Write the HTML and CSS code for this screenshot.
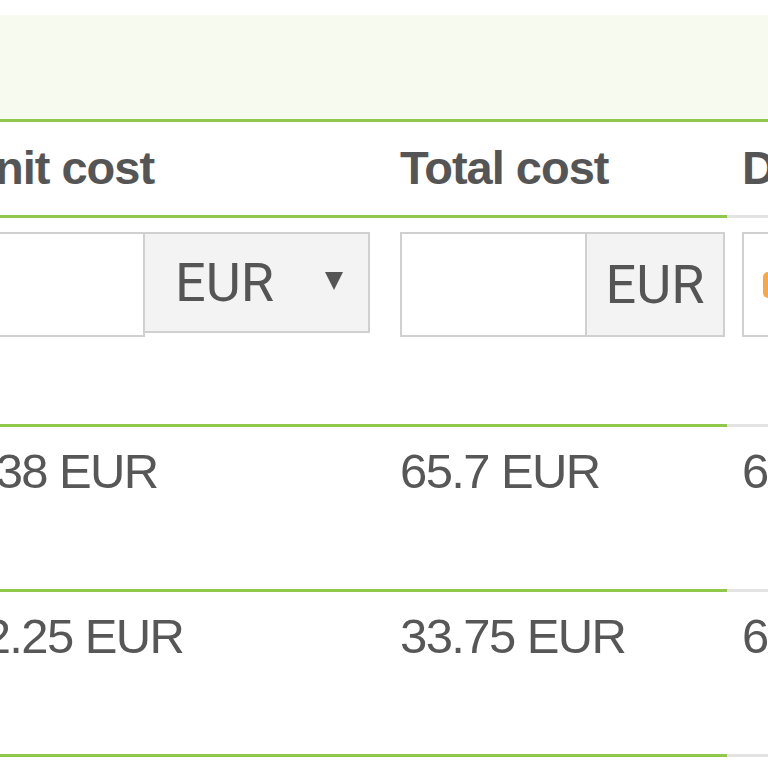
FILE: index.html
```html
<!DOCTYPE html>
<html lang="en">
<head>
  <meta charset="UTF-8">
  <meta name="viewport" content="width=device-width, initial-scale=1.0">
  <title>Costs</title>
  <link rel="stylesheet" href="styles.css">
</head>
<body>
  <div class="page">
    <div class="band"></div>
    <table class="costs">
      <colgroup>
        <col class="col-unit">
        <col class="col-total">
        <col class="col-date">
      </colgroup>
      <thead>
        <tr>
          <th>Unit cost</th>
          <th>Total cost</th>
          <th class="other">Date</th>
        </tr>
      </thead>
      <tbody>
        <tr class="filters">
          <td>
            <div class="input-group">
              <input type="text" class="field">
              <div class="select-wrap">
                <select class="addon-select">
                  <option>EUR</option>
                </select>
              </div>
            </div>
          </td>
          <td>
            <div class="input-group">
              <input type="text" class="field">
              <span class="addon">EUR</span>
            </div>
          </td>
          <td class="other">
            <div class="date-field">
              <span class="date-icon"></span>
            </div>
          </td>
        </tr>
        <tr class="item">
          <td>1.38 EUR</td>
          <td>65.7 EUR</td>
          <td class="other">6/12/2016</td>
        </tr>
        <tr class="item">
          <td>12.25 EUR</td>
          <td>33.75 EUR</td>
          <td class="other">6/12/2016</td>
        </tr>
      </tbody>
    </table>
  </div>
</body>
</html>
```
FILE: styles.css
```css
body {
  margin: 0;
  background-color: #fff;
  font-family: "Liberation Sans", Arial, sans-serif;
  color: #575757;
  overflow: hidden;
}

.page {
  width: 768px;
  height: 768px;
  overflow: hidden;
}

.band {
  margin-top: 15px;
  height: 104px;
  background-color: #f7fbef;
  border-bottom: 3px solid #90c84c;
}

.costs {
  margin-left: -53px;
  border-collapse: separate;
  border-spacing: 0;
  table-layout: fixed;
  width: 1105px;
}

.col-unit {
  width: 438px;
}

.col-total {
  width: 342px;
}

.col-date {
  width: 325px;
}

th,
td {
  text-align: left;
  vertical-align: top;
  padding: 0 2px 0 15px;
  border-bottom: 3px solid #90c84c;
  white-space: nowrap;
}

th {
  font-size: 47px;
  font-weight: bold;
  letter-spacing: -1px;
  line-height: 56px;
  padding-top: 18px;
  padding-bottom: 19px;
  color: #555;
}

td {
  font-size: 49px;
  letter-spacing: -1.6px;
  line-height: 56px;
  padding-top: 16px;
  padding-bottom: 90px;
}

th:first-child,
td:first-child {
  padding-right: 13px;
}

.item td:first-child {
  text-indent: -4px;
}

th.other,
td.other {
  border-bottom-color: #e3e3e3;
}

.filters td {
  padding-top: 14px;
  padding-bottom: 87px;
}

.input-group {
  display: flex;
  align-items: flex-start;
}

.field {
  flex: 1;
  min-width: 0;
  height: 105px;
  box-sizing: border-box;
  border: 2px solid #d0d0d0;
  background-color: #fff;
  margin: 0;
  padding: 0;
}

.select-wrap {
  position: relative;
  width: 227px;
}

.select-wrap::after {
  content: "";
  position: absolute;
  left: 180px;
  top: 40px;
  width: 0;
  height: 0;
  border-left: 9px solid transparent;
  border-right: 9px solid transparent;
  border-top: 18px solid #555;
  pointer-events: none;
}

.addon-select {
  appearance: none;
  -webkit-appearance: none;
  width: 227px;
  height: 101px;
  box-sizing: border-box;
  margin: 0;
  margin-left: -2px;
  padding: 0 0 0 30px;
  border: 2px solid #d0d0d0;
  border-radius: 0;
  background-color: #f3f3f3;
  font-family: Roboto, sans-serif;
  font-size: 54px;
  letter-spacing: 0;
  color: #555;
}

.addon {
  width: 140px;
  height: 105px;
  box-sizing: border-box;
  margin-left: -2px;
  border: 2px solid #d0d0d0;
  background-color: #f3f3f3;
  display: flex;
  align-items: center;
  justify-content: center;
  font-family: Roboto, sans-serif;
  font-size: 54px;
  letter-spacing: 0;
  color: #555;
}

.date-field {
  height: 105px;
  width: 300px;
  box-sizing: border-box;
  border: 2px solid #d0d0d0;
  background-color: #fff;
  display: flex;
  align-items: center;
  padding-left: 19px;
}

.date-icon {
  width: 24px;
  height: 26px;
  border-radius: 5px;
  background-color: #f7a94a;
}
```
